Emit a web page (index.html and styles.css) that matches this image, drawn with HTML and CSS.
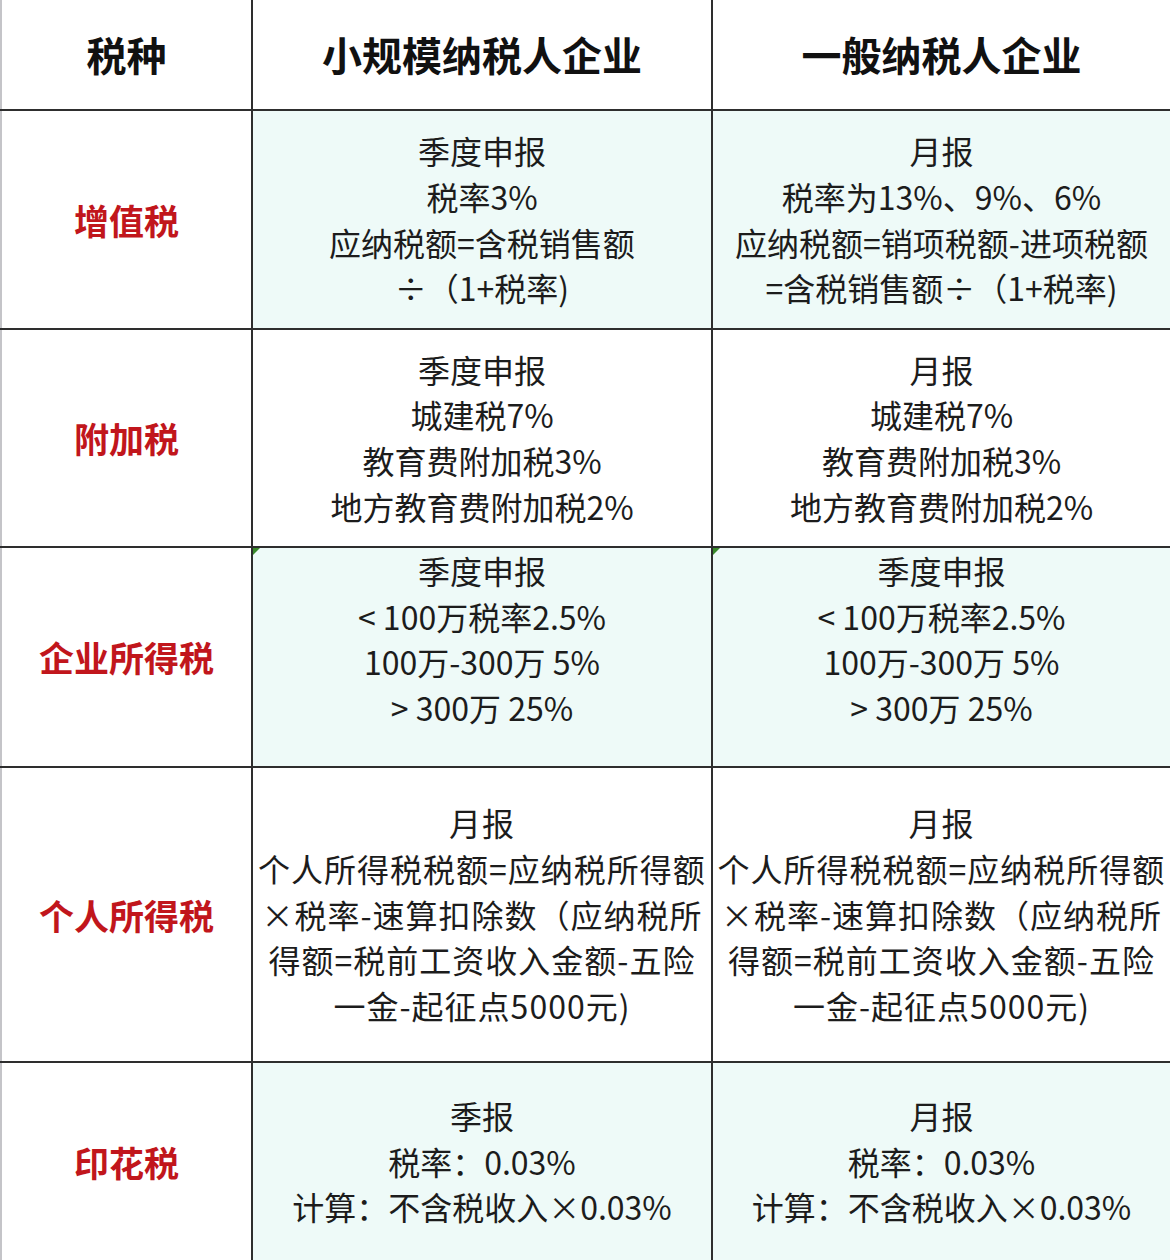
FILE: index.html
```html
<!DOCTYPE html>
<html lang="zh-CN">
<head>
<meta charset="utf-8">
<title>税种对比</title>
<link rel="stylesheet" href="styles.css">
</head>
<body>
<table class="tax">
  <colgroup>
    <col class="c-name">
    <col class="c-small">
    <col class="c-general">
  </colgroup>
  <tr class="r-head">
    <th class="first">税种</th>
    <th>小规模纳税人企业</th>
    <th class="last">一般纳税人企业</th>
  </tr>
  <tr class="r1 tint">
    <td class="first label">增值税</td>
    <td>季度申报<br>税率3%<br>应纳税额=含税销售额<br>÷（1+税率)</td>
    <td class="last">月报<br>税率为13%、9%、6%<br>应纳税额=销项税额-进项税额<br>=含税销售额÷（1+税率)</td>
  </tr>
  <tr class="r2">
    <td class="first label">附加税</td>
    <td>季度申报<br>城建税7%<br>教育费附加税3%<br>地方教育费附加税2%</td>
    <td class="last">月报<br>城建税7%<br>教育费附加税3%<br>地方教育费附加税2%</td>
  </tr>
  <tr class="r3 tint">
    <td class="first label">企业所得税</td>
    <td class="top flag">季度申报<br>&lt; 100万税率2.5%<br>100万-300万 5%<br>&gt; 300万 25%</td>
    <td class="last top flag">季度申报<br>&lt; 100万税率2.5%<br>100万-300万 5%<br>&gt; 300万 25%</td>
  </tr>
  <tr class="r4">
    <td class="first label">个人所得税</td>
    <td class="wide">月报<br>个人所得税税额=应纳税所得额<br>×税率-速算扣除数（应纳税所<br>得额=税前工资收入金额-五险<br>一金-起征点5000元)</td>
    <td class="last wide">月报<br>个人所得税税额=应纳税所得额<br>×税率-速算扣除数（应纳税所<br>得额=税前工资收入金额-五险<br>一金-起征点5000元)</td>
  </tr>
  <tr class="r5 tint">
    <td class="first label">印花税</td>
    <td>季报<br>税率：0.03%<br>计算：不含税收入×0.03%</td>
    <td class="last">月报<br>税率：0.03%<br>计算：不含税收入×0.03%</td>
  </tr>
</table>
</body>
</html>
```

FILE: styles.css
```css
html, body {
  margin: 0;
  padding: 0;
  background: #ffffff;
}

body {
  width: 1170px;
  height: 1260px;
  overflow: hidden;
  font-family: "Noto Sans CJK SC", "Noto Sans", sans-serif;
  color: #1c1c1c;
}

.tax {
  width: 1170px;
  table-layout: fixed;
  border-collapse: collapse;
}

.c-name { width: 251px; }
.c-small { width: 460px; }
.c-general { width: 459px; }

.tax th,
.tax td {
  border: 2px solid #2e2e2e;
  text-align: center;
  vertical-align: middle;
  padding: 0;
  font-size: 32px;
  line-height: 45.7px;
  white-space: nowrap;
  position: relative;
}

.tax tr:first-child th { border-top: none; }
.tax tr:last-child td { border-bottom: none; }
.tax .first { border-left: 2px solid #c4c4c8; }

.tax th {
  font-size: 40px;
  font-weight: 700;
  color: #111111;
  background: #ffffff;
}

.r-head { height: 110px; }
.r1 { height: 219px; }
.r2 { height: 218px; }
.r3 { height: 220px; }
.r4 { height: 295px; }
.r5 { height: 198px; }

.tint td { background: #eefaf8; }
.tint td.label { background: #ffffff; }

.label {
  font-size: 35px !important;
  font-weight: 700;
  color: #c1161c;
}

.top { vertical-align: top !important; }

.wide { letter-spacing: 1px; }

.flag::before {
  content: "";
  position: absolute;
  left: 0;
  top: 0;
  width: 0;
  height: 0;
  border-top: 7px solid #3a8a2c;
  border-right: 7px solid transparent;
}
```
